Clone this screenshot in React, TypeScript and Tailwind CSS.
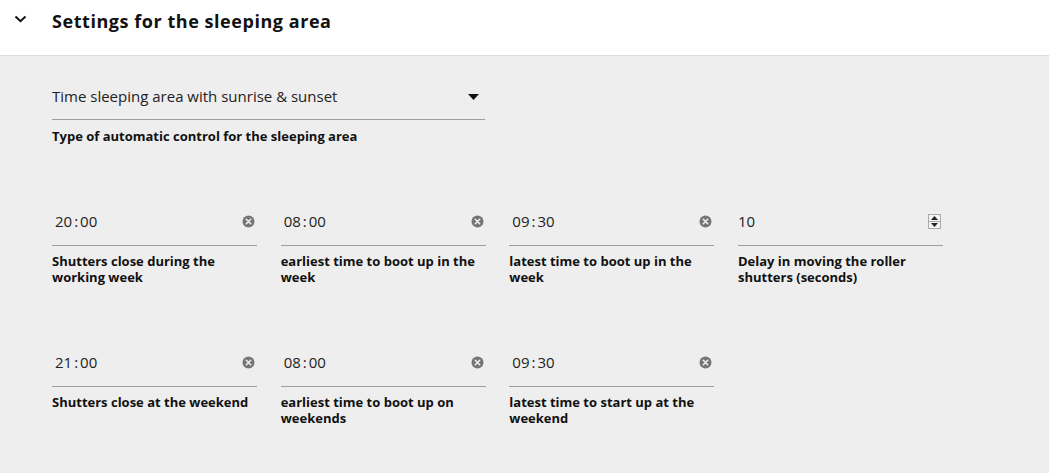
import React from 'react';

type Field = {
  value: string;
  label: string;
  kind: 'time' | 'number';
};

const rows: Field[][] = [
  [
    { value: '20:00', label: 'Shutters close during the working week', kind: 'time' },
    { value: '08:00', label: 'earliest time to boot up in the week', kind: 'time' },
    { value: '09:30', label: 'latest time to boot up in the week', kind: 'time' },
    { value: '10', label: 'Delay in moving the roller shutters (seconds)', kind: 'number' },
  ],
  [
    { value: '21:00', label: 'Shutters close at the weekend', kind: 'time' },
    { value: '08:00', label: 'earliest time to boot up on weekends', kind: 'time' },
    { value: '09:30', label: 'latest time to start up at the weekend', kind: 'time' },
  ],
];

const ClearIcon = () => (
  <svg width="13" height="13" viewBox="0 0 13 13">
    <circle cx="6.5" cy="6.5" r="6" fill="#757575" />
    <path d="M4.3 4.3 L8.7 8.7 M8.7 4.3 L4.3 8.7" stroke="#eeeeee" strokeWidth="1.6" strokeLinecap="round" />
  </svg>
);

const SpinIcon = () => (
  <div className="flex flex-col w-[13px] h-[15px] border border-[#aaa] bg-[#f4f4f4]">
    <div className="flex-1 flex items-center justify-center border-b border-[#aaa]">
      <svg width="7" height="4" viewBox="0 0 7 4"><path d="M0 4 L3.5 0 L7 4 Z" fill="#222" /></svg>
    </div>
    <div className="flex-1 flex items-center justify-center">
      <svg width="7" height="4" viewBox="0 0 7 4"><path d="M0 0 L3.5 4 L7 0 Z" fill="#222" /></svg>
    </div>
  </div>
);

const TimeValue = ({ value }: { value: string }) => {
  const [h, m] = value.split(':');
  return (
    <span className="pl-[3px]">
      {h}
      <span className="mx-[2px]">:</span>
      {m}
    </span>
  );
};

const InputField: React.FC<{ field: Field }> = ({ field }) => (
  <div className="w-[205px]">
    <div className="h-[48px] flex items-center justify-between pr-[2px] border-b border-[#9e9e9e] text-[15px] text-[#222]">
      {field.kind === 'time' ? <TimeValue value={field.value} /> : <span>{field.value}</span>}
      {field.kind === 'time' ? <ClearIcon /> : <SpinIcon />}
    </div>
    <div className="pt-[7px] text-[13px] leading-[16px] font-bold text-[#111]">{field.label}</div>
  </div>
);

export default function App() {
  return (
    <div className="w-[1049px] h-[473px] bg-[#eeeeee] overflow-hidden" style={{ fontFamily: '"Open Sans", "Liberation Sans", sans-serif' }}>
      {/* Header */}
      <div className="h-[56px] bg-white border-b border-[#dcdcdc] flex items-center">
        <div className="w-[52px] flex justify-center pr-[12px] pb-[18px]">
          <svg width="13" height="8" viewBox="0 0 13 8">
            <path d="M1.5 1.5 L6.5 6.2 L11.5 1.5" stroke="#111" strokeWidth="2" fill="none" />
          </svg>
        </div>
        <h2 className="text-[18px] font-bold tracking-[0.55px] text-[#111] pb-[12px]">Settings for the sleeping area</h2>
      </div>

      <div className="pl-[52px] pt-[24px]">
        {/* Dropdown */}
        <div className="w-[433px]">
          <div className="h-[40px] flex items-center justify-between border-b border-[#9e9e9e] text-[15px] text-[#222] pr-[6px] pb-[6px]">
            <span>Time sleeping area with sunrise &amp; sunset</span>
            <svg width="11" height="6" viewBox="0 0 11 6"><path d="M0 0 L11 0 L5.5 6 Z" fill="#111" /></svg>
          </div>
          <div className="pt-[8px] text-[13px] leading-[16px] font-bold text-[#111]">Type of automatic control for the sleeping area</div>
        </div>

        {/* Fields */}
        <div className="flex flex-col gap-[54px] pt-[54px]">
          {rows.map((row, i) => (
            <div key={i} className="flex gap-[23.67px]">
              {row.map((field, j) => (
                <InputField key={j} field={field} />
              ))}
            </div>
          ))}
        </div>
      </div>
    </div>
  );
}
